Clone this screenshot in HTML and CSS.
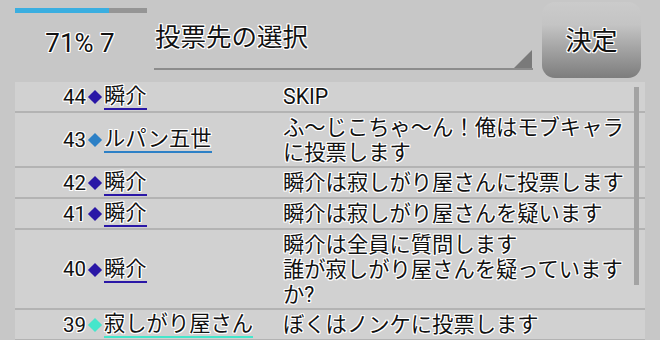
FILE: index.html
```html
<!DOCTYPE html>
<html lang="ja">
<head>
<meta charset="utf-8">
<link rel="stylesheet" href="styles.css">
</head>
<body>
<div class="screen">
  <header class="top">
    <div class="status">
      <div class="progress"><div class="fill" style="width:71%"></div></div>
      <div class="count">71% 7</div>
    </div>
    <div class="spinner">
      <span class="spinner-text">投票先の選択</span>
      <span class="caret"></span>
    </div>
    <button class="decide">決定</button>
  </header>
  <div class="list">
    <div class="row">
      <div class="num">44</div>
      <div class="who"><span class="dia c-shun"></span><span class="name u-shun">瞬介</span></div>
      <div class="msg">SKIP</div>
    </div>
    <div class="row">
      <div class="num">43</div>
      <div class="who"><span class="dia c-lupin"></span><span class="name u-lupin">ルパン五世</span></div>
      <div class="msg">ふ〜じこちゃ〜ん！俺はモブキャラに投票します</div>
    </div>
    <div class="row">
      <div class="num">42</div>
      <div class="who"><span class="dia c-shun"></span><span class="name u-shun">瞬介</span></div>
      <div class="msg">瞬介は寂しがり屋さんに投票します</div>
    </div>
    <div class="row">
      <div class="num">41</div>
      <div class="who"><span class="dia c-shun"></span><span class="name u-shun">瞬介</span></div>
      <div class="msg">瞬介は寂しがり屋さんを疑います</div>
    </div>
    <div class="row">
      <div class="num">40</div>
      <div class="who"><span class="dia c-shun"></span><span class="name u-shun">瞬介</span></div>
      <div class="msg">瞬介は全員に質問します<br>誰が寂しがり屋さんを疑っていますか?</div>
    </div>
    <div class="row">
      <div class="num">39</div>
      <div class="who"><span class="dia c-lonely"></span><span class="name u-lonely">寂しがり屋さん</span></div>
      <div class="msg">ぼくはノンケに投票します</div>
    </div>
    <div class="scrollbar"></div>
  </div>
</div>
</body>
</html>
```
FILE: styles.css
```css
* { box-sizing: border-box; }
html, body {
  margin: 0;
  padding: 0;
  background: #c7c7c7;
}
body {
  width: 660px;
  height: 340px;
  overflow: hidden;
  font-family: Roboto, "Noto Sans CJK JP", sans-serif;
  color: #111;
}
.screen {
  width: 660px;
  height: 340px;
  overflow: hidden;
}
.top {
  display: flex;
  height: 82px;
}
.status {
  width: 132px;
  margin-left: 15px;
  padding-top: 8px;
}
.progress {
  height: 5px;
  background: #959595;
}
.fill {
  height: 100%;
  background: #3aaee0;
}
.count {
  margin-top: 15px;
  font-size: 26px;
  line-height: 30px;
  text-align: center;
  padding-right: 2px;
}
.spinner {
  width: 379px;
  margin-left: 7px;
  height: 70px;
  border-bottom: 2px solid #8c8c8c;
  display: flex;
}
.spinner-text {
  flex: 1;
  font-size: 25.5px;
  line-height: 30px;
  padding-top: 22px;
  padding-left: 1px;
}
.caret {
  align-self: flex-end;
  width: 18px;
  height: 18px;
  margin-right: 1px;
  background: #7a7a7a;
  clip-path: polygon(100% 0, 100% 100%, 0 100%);
}
.decide {
  margin: 2px 0 0 9px;
  width: 99px;
  height: 76px;
  border: none;
  border-radius: 13px;
  background: linear-gradient(#cbcbcb 0%, #c4c4c4 30%, #a0a0a0 65%, #7d7d7d 100%);
  font-family: "Noto Sans CJK JP", sans-serif;
  font-size: 26px;
  color: #111;
  padding: 0 0 4px;
}
.count, .spinner-text, .decide, .num, .name, .msg {
  text-shadow: -1px -1px 0 #fff, 1px -1px 0 #fff, -1px 1px 0 #fff, 1px 1px 0 #fff,
    0 -1px 0 #fff, 0 1px 0 #fff, -1px 0 0 #fff, 1px 0 0 #fff;
}
.list {
  position: relative;
  margin-left: 15px;
  width: 630px;
  height: 258px;
  background: #d1d1d1;
}
.row {
  display: flex;
  padding: 2px 0 1px;
  border-bottom: 2px solid #b3b3b3;
  font-size: 21.3px;
  line-height: 25px;
}
.num {
  width: 71px;
  flex-shrink: 0;
  text-align: right;
  align-self: center;
  font-size: 20.5px;
}
.who {
  width: 197px;
  flex-shrink: 0;
  display: flex;
  align-items: center;
}
.dia {
  flex-shrink: 0;
  width: 10px;
  height: 10px;
  margin: 0 4px 0 4px;
  transform: rotate(45deg);
}
.c-shun { background: #2a17a6; }
.c-lupin { background: #2c80c6; }
.c-lonely { background: #45e6cb; }
.name {
  line-height: 23px;
  padding-bottom: 1px;
  border-bottom: 2px solid;
  white-space: nowrap;
}
.u-shun { border-color: #2a17a6; }
.u-lupin { border-color: #2c80c6; }
.u-lonely { border-color: #45e6cb; }
.msg {
  width: 347px;
}
.scrollbar {
  position: absolute;
  top: 5px;
  right: 6px;
  width: 5px;
  height: 198px;
  background: #a3a3a3;
}
```
